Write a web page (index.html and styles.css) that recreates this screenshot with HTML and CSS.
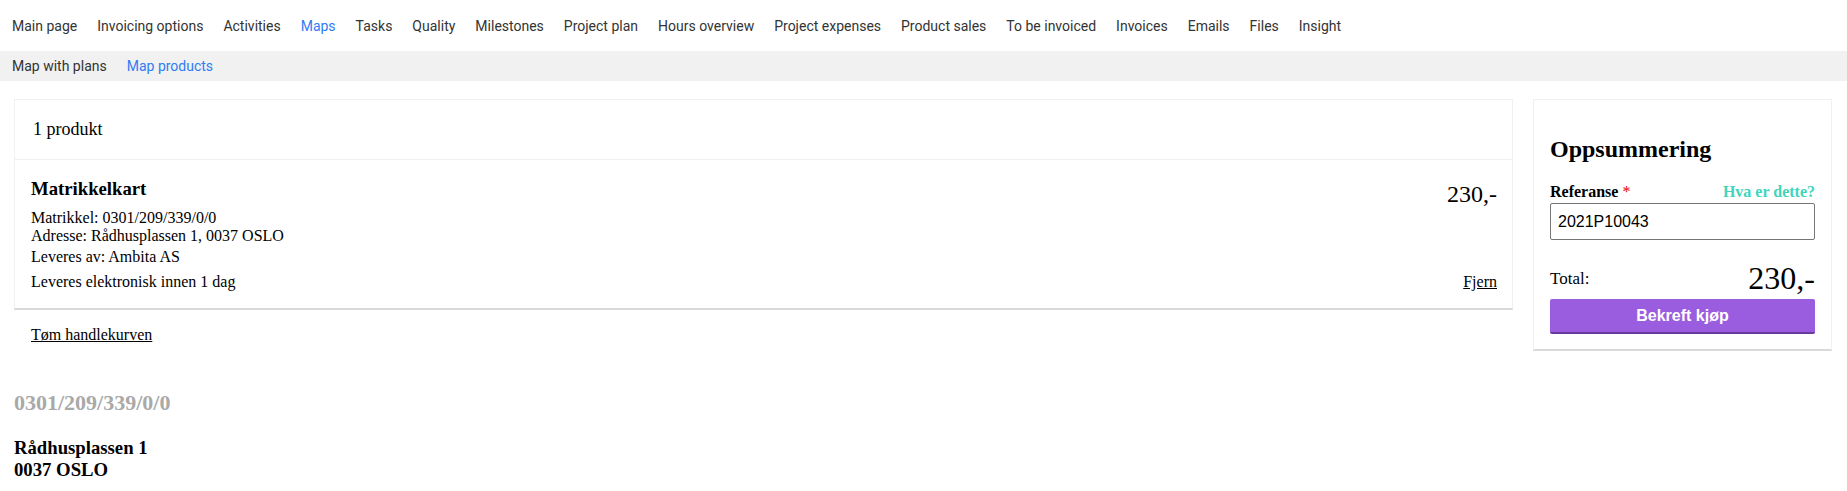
FILE: index.html
```html
<!DOCTYPE html>
<html lang="no">
	<head>
		<title>Map products</title>
		<meta charset="utf-8" />
		<link rel="stylesheet" href="styles.css">
	</head>

	<body>
		<!-- project tabs -->
		<nav class="topnav">
			<a href="#">Main page</a>
			<a href="#">Invoicing options</a>
			<a href="#">Activities</a>
			<a href="#" class="active">Maps</a>
			<a href="#">Tasks</a>
			<a href="#">Quality</a>
			<a href="#">Milestones</a>
			<a href="#">Project plan</a>
			<a href="#">Hours overview</a>
			<a href="#">Project expenses</a>
			<a href="#">Product sales</a>
			<a href="#">To be invoiced</a>
			<a href="#">Invoices</a>
			<a href="#">Emails</a>
			<a href="#">Files</a>
			<a href="#">Insight</a>
		</nav>
		<nav class="subnav">
			<a href="#">Map with plans</a>
			<a href="#" class="active">Map products</a>
		</nav>

		<div class="checkout">
			<!-- cart -->
			<div class="cart-col">
				<div class="card">
					<div class="card-head">1 produkt</div>
					<div class="item">
						<div class="item-top">
							<div>
								<h3>Matrikkelkart</h3>
								<p class="line">Matrikkel: 0301/209/339/0/0<br />Adresse: Rådhusplassen 1, 0037 OSLO</p>
								<p class="line">Leveres av: Ambita AS</p>
							</div>
							<div class="price">230,-</div>
						</div>
						<div class="item-foot">
							<span>Leveres elektronisk innen 1 dag</span>
							<a href="#">Fjern</a>
						</div>
					</div>
				</div>
				<div class="cart-actions">
					<a href="#">Tøm handlekurven</a>
				</div>
			</div>

			<!-- summary -->
			<div class="summary">
				<h2>Oppsummering</h2>
				<div class="ref-label">
					<label for="ref">Referanse <span class="req">*</span></label>
					<a href="#" class="help">Hva er dette?</a>
				</div>
				<input id="ref" type="text" value="2021P10043" />
				<div class="total">
					<span>Total:</span>
					<span class="total-sum">230,-</span>
				</div>
				<button class="confirm">Bekreft kjøp</button>
			</div>
		</div>

		<div class="property">
			<h2 class="prop-id">0301/209/339/0/0</h2>
			<h3>Rådhusplassen 1<br />0037 OSLO</h3>
		</div>
	</body>
</html>
```

FILE: styles.css
```css
body {
	margin: 0;
	font-family: "Liberation Serif", "Times New Roman", serif;
	font-size: 16px;
	color: #000;
}

a {
	color: #000;
}

/* tabs at the top */
.topnav,
.subnav {
	display: flex;
	align-items: center;
	gap: 20px;
	padding-left: 12px;
	font-family: Roboto, "Liberation Sans", sans-serif;
	font-size: 14px;
}
.topnav {
	height: 51px;
}
.subnav {
	height: 30px;
	background: #f0f1f0;
}
.topnav a,
.subnav a {
	color: #333;
	text-decoration: none;
}
.topnav a.active,
.subnav a.active {
	color: #2f7cf6;
}

/* cart + summary */
.checkout {
	display: flex;
	align-items: flex-start;
	gap: 20px;
	padding: 18px 15px 0 14px;
}
.cart-col {
	flex: 1;
}
.card {
	border: 1px solid #f0f0f0;
	border-bottom: 2px solid #d9d9d9;
}
.card-head {
	height: 59px;
	display: flex;
	align-items: center;
	padding: 0 18px;
	font-size: 18px;
	border-bottom: 1px solid #f0f0f0;
}
.item {
	padding: 18px 15px 17px 16px;
}
.item-top {
	display: flex;
	justify-content: space-between;
}
.item h3 {
	margin: 0 0 9px;
}
.line {
	margin: 0 0 3px;
}
.price {
	font-size: 24px;
	margin-top: 3px;
}
.item-foot {
	display: flex;
	justify-content: space-between;
	margin-top: 4px;
}
.cart-actions {
	padding: 16px 17px 0;
}

.summary {
	width: 265px;
	padding: 16px 16px 15px;
	border: 1px solid #f0f0f0;
	border-bottom: 2px solid #d9d9d9;
}
.summary h2 {
	font-size: 24px;
	margin: 20px 0;
}
.ref-label {
	display: flex;
	justify-content: space-between;
	font-weight: bold;
}
.req {
	color: #e00;
	font-weight: normal;
}
.help {
	color: #40d5bb;
	text-decoration: none;
}
.summary input {
	display: block;
	box-sizing: border-box;
	width: 100%;
	height: 37px;
	margin: 2px 0 0;
	padding: 0 7px;
	border: 1px solid #767676;
	border-radius: 2px;
	font-family: "Liberation Sans", Arial, sans-serif;
	font-size: 16px;
	color: #000;
}
.total {
	display: flex;
	justify-content: space-between;
	align-items: center;
	margin-top: 20px;
	font-size: 17px;
}
.total-sum {
	font-size: 32px;
}
.confirm {
	display: block;
	width: 100%;
	height: 35px;
	margin-top: 2px;
	border: none;
	border-bottom: 2px solid #6a3a9e;
	border-radius: 2px;
	background: #9b5de0;
	color: #fff;
	font-family: "Liberation Sans", Arial, sans-serif;
	font-size: 16px;
	font-weight: bold;
}

/* property info under the cart */
.property {
	padding: 0 14px;
}
.prop-id {
	margin: 39px 0 21px;
	font-size: 22px;
	color: #a9a9a9;
}
.property h3 {
	margin: 0;
}
```
